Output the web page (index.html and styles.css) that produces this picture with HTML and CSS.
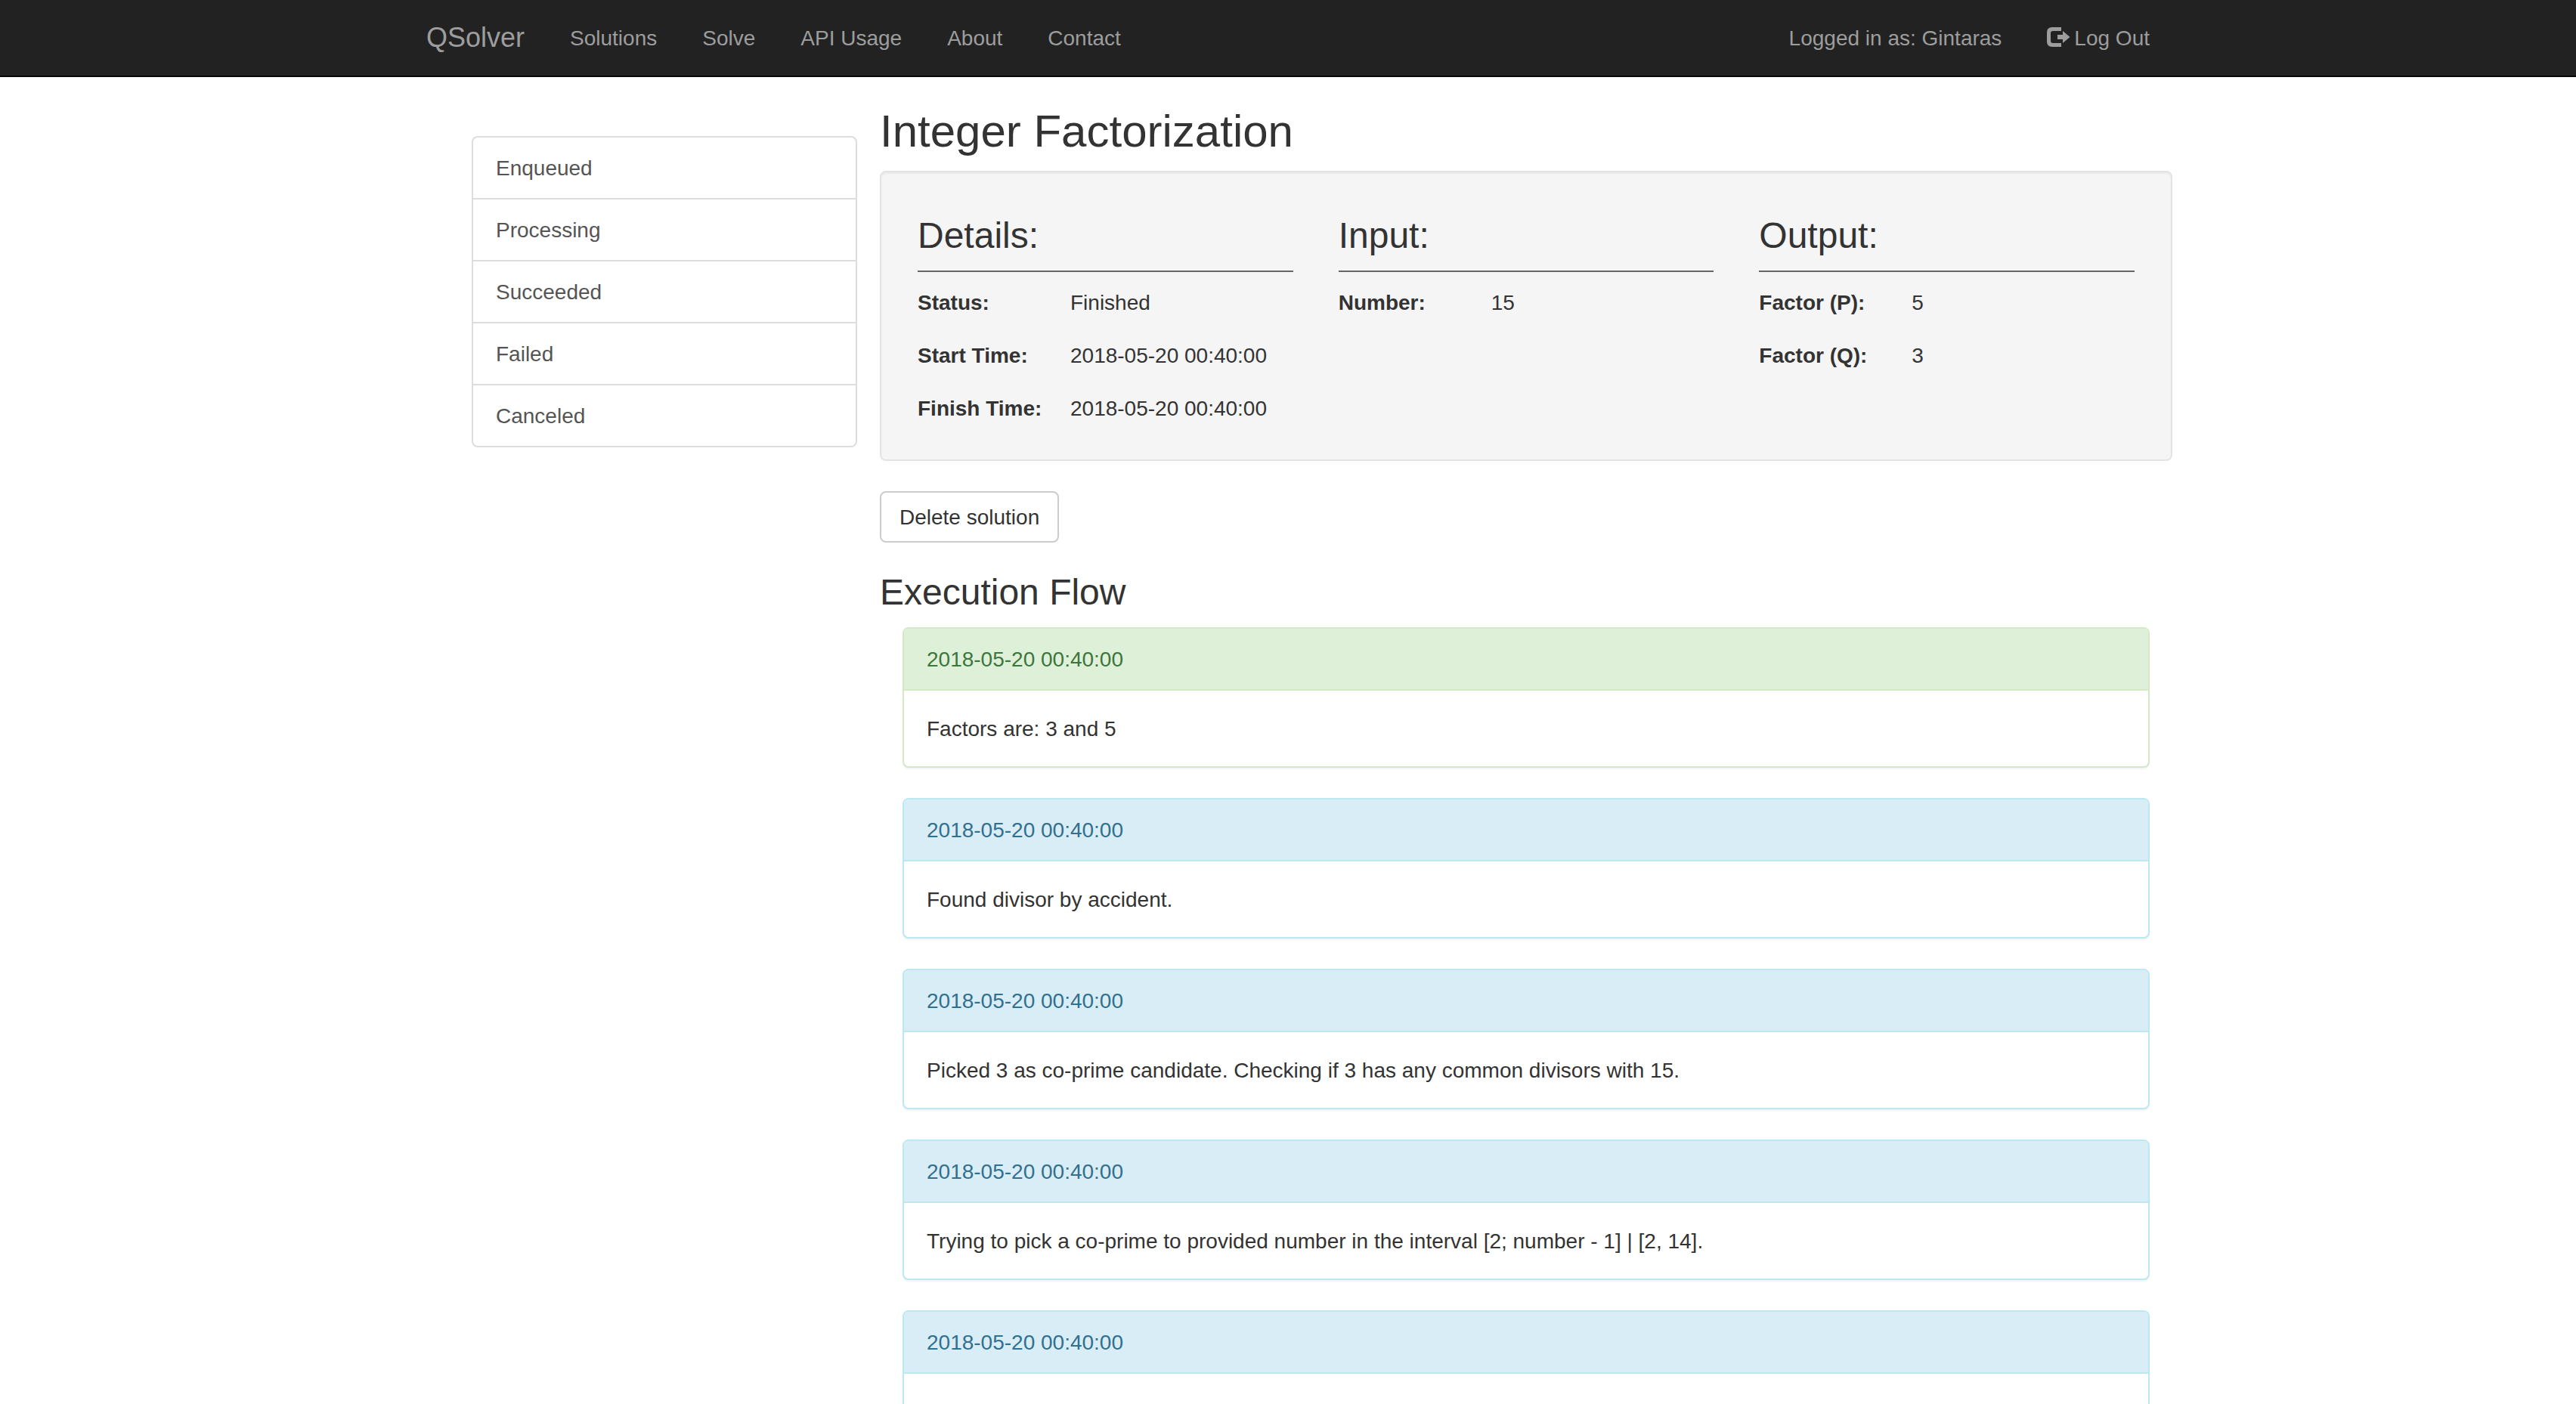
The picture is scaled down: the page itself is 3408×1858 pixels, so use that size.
FILE: index.html
```html
<!DOCTYPE html>
<html lang="en">
<head>
<meta charset="utf-8">
<meta name="viewport" content="width=device-width, initial-scale=1">
<title>Integer Factorization - QSolver</title>
<link rel="stylesheet" href="styles.css">
</head>
<body>
<header class="navbar">
  <nav class="navbar-inner">
    <a class="navbar-brand" href="#">QSolver</a>
    <ul class="nav">
      <li><a class="nav-link" href="#">Solutions</a></li>
      <li><a class="nav-link" href="#">Solve</a></li>
      <li><a class="nav-link" href="#">API Usage</a></li>
      <li><a class="nav-link" href="#">About</a></li>
      <li><a class="nav-link" href="#">Contact</a></li>
    </ul>
    <ul class="nav nav-right">
      <li><a class="nav-link" href="#">Logged in as: Gintaras</a></li>
      <li><a class="nav-link" href="#"><svg class="icon" viewBox="0 0 31 26" aria-hidden="true"><path d="M19 0H7Q0 0 0 7V19Q0 26 7 26H19V21H8Q5 21 5 18V8Q5 5 8 5H19Z"/><path d="M14 10H21V5L30.500 13L21 21V16H14Z"/></svg>Log Out</a></li>
    </ul>
  </nav>
</header>

<div class="layout">
  <nav class="list-group" aria-label="Solution states">
    <a class="list-group-item" href="#">Enqueued</a>
    <a class="list-group-item" href="#">Processing</a>
    <a class="list-group-item" href="#">Succeeded</a>
    <a class="list-group-item" href="#">Failed</a>
    <a class="list-group-item" href="#">Canceled</a>
  </nav>

  <main class="content">
    <h1 class="page-title">Integer Factorization</h1>
    <section class="well">
      <div class="summary">
        <h2 class="section-title summary-title">Details:</h2>
        <dl class="fields">
          <dt>Status:</dt><dd>Finished</dd>
          <dt>Start Time:</dt><dd>2018-05-20 00:40:00</dd>
          <dt>Finish Time:</dt><dd>2018-05-20 00:40:00</dd>
        </dl>
      </div>
      <div class="summary">
        <h2 class="section-title summary-title">Input:</h2>
        <dl class="fields">
          <dt>Number:</dt><dd>15</dd>
        </dl>
      </div>
      <div class="summary">
        <h2 class="section-title summary-title">Output:</h2>
        <dl class="fields">
          <dt>Factor (P):</dt><dd>5</dd>
          <dt>Factor (Q):</dt><dd>3</dd>
        </dl>
      </div>
    </section>

    <button class="btn" type="button">Delete solution</button>

    <h2 class="section-title">Execution Flow</h2>
    <div class="flow">
      <article class="panel panel-success">
        <div class="panel-heading">2018-05-20 00:40:00</div>
        <div class="panel-body">Factors are: 3 and 5</div>
      </article>
      <article class="panel panel-info">
        <div class="panel-heading">2018-05-20 00:40:00</div>
        <div class="panel-body">Found divisor by accident.</div>
      </article>
      <article class="panel panel-info">
        <div class="panel-heading">2018-05-20 00:40:00</div>
        <div class="panel-body">Picked 3 as co-prime candidate. Checking if 3 has any common divisors with 15.</div>
      </article>
      <article class="panel panel-info">
        <div class="panel-heading">2018-05-20 00:40:00</div>
        <div class="panel-body">Trying to pick a co-prime to provided number in the interval [2; number - 1] | [2, 14].</div>
      </article>
      <article class="panel panel-info">
        <div class="panel-heading">2018-05-20 00:40:00</div>
        <div class="panel-body"></div>
      </article>
    </div>
  </main>
</div>
</body>
</html>
```

FILE: styles.css
```css
* {
  box-sizing: border-box;
}

body {
  margin: 0;
  background: #fff;
  color: #333;
  font-family: "Liberation Sans", Arial, sans-serif;
  font-size: 28px;
  line-height: 40px;
}

a {
  color: inherit;
  text-decoration: none;
}

/* Top bar */
.navbar {
  background: #222;
  border-bottom: 2px solid #080808;
  color: #9d9d9d;
}

.navbar-inner {
  display: flex;
  max-width: 2340px;
  margin: 0 auto;
}

.navbar-brand {
  padding: 30px;
  font-size: 36px;
}

.nav {
  display: flex;
  margin: 0;
  padding: 0;
  list-style: none;
}

.nav-right {
  margin-left: auto;
}

.nav-link {
  display: flex;
  align-items: center;
  gap: 5px;
  padding: 31px 30px 29px;
}

.icon {
  width: 31px;
  height: 26px;
  margin-bottom: 4px;
  fill: currentColor;
}

/* Sidebar and content columns */
.layout {
  display: grid;
  grid-template-columns: 17fr 57fr;
  gap: 30px;
  align-items: start;
  max-width: 2340px;
  margin: 0 auto;
  padding: 39px 0 40px 90px;
}

.list-group {
  margin-top: 39px;
  border: 2px solid #ddd;
  border-radius: 8px;
}

.list-group-item {
  display: block;
  padding: 21px 30px 19px;
  color: #555;
}

.list-group-item + .list-group-item {
  border-top: 2px solid #ddd;
}

.page-title {
  margin: 0 0 19px;
  font-size: 60px;
  font-weight: 400;
  line-height: 66px;
}

.section-title {
  margin: 0 0 20px;
  font-size: 48px;
  font-weight: 400;
  line-height: 53px;
}

/* Summary box */
.well {
  display: grid;
  grid-template-columns: repeat(3, 1fr);
  gap: 60px;
  margin-bottom: 40px;
  padding: 57px 48px 47px;
  background: #f5f5f5;
  border: 2px solid #e3e3e3;
  border-radius: 8px;
  box-shadow: inset 0 2px 2px rgba(0, 0, 0, 0.05);
}

.summary-title {
  margin-bottom: 21px;
  padding-bottom: 20px;
  border-bottom: 2px solid #666;
}

.fields {
  display: grid;
  grid-template-columns: 202px 1fr;
  row-gap: 30px;
  margin: 0;
}

.fields dt {
  font-weight: 700;
}

.fields dd {
  margin: 0;
}

.btn {
  display: block;
  margin-bottom: 39px;
  padding: 13px 24px 11px;
  background: #fff;
  border: 2px solid #ccc;
  border-radius: 8px;
  color: #333;
  font: inherit;
}

/* Execution log */
.flow {
  display: flex;
  flex-direction: column;
  gap: 40px;
  padding: 0 30px;
}

.panel {
  background: #fff;
  border: 2px solid;
  border-radius: 8px;
  box-shadow: 0 2px 2px rgba(0, 0, 0, 0.05);
}

.panel-heading {
  padding: 21px 30px 19px;
  border-bottom: 2px solid;
  border-color: inherit;
  border-radius: 6px 6px 0 0;
}

.panel-body {
  padding: 31px 30px 29px;
}

.panel-success {
  border-color: #d6e9c6;
}

.panel-success .panel-heading {
  background: #dff0d8;
  color: #3c763d;
}

.panel-info {
  border-color: #bce8f1;
}

.panel-info .panel-heading {
  background: #d9edf7;
  color: #31708f;
}
```
